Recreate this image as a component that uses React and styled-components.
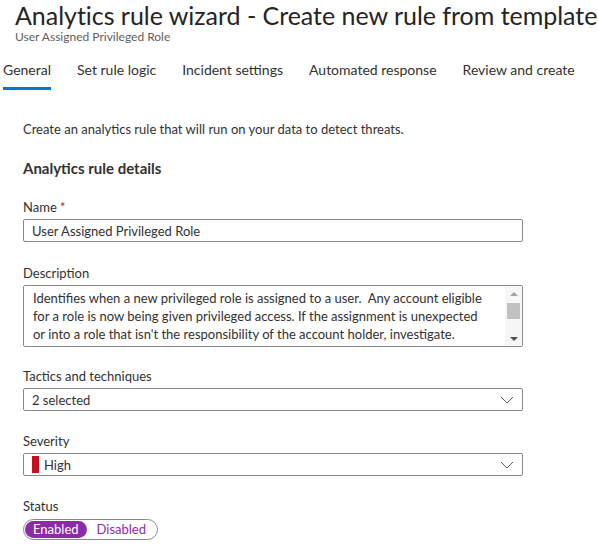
import React from 'react'
import styled, { createGlobalStyle } from 'styled-components'

const GlobalStyle = createGlobalStyle`
  body {
    margin: 0;
    background: #ffffff;
    font-family: Lato, "Open Sans", sans-serif;
    color: #323130;
  }
`

const Page = styled.div`
  width: 598px;
  height: 546px;
  overflow: hidden;
  background: #fff;
`

const Header = styled.header`
  padding: 0 0 0 15px;
`

const Title = styled.h1`
  margin: 0;
  font-size: 25px;
  font-weight: 400;
  line-height: 30px;
  white-space: nowrap;
  letter-spacing: -0.03px;
  color: #252423;
`

const Subtitle = styled.div`
  font-size: 12px;
  line-height: 14px;
  color: #605e5c;
`

const Tabs = styled.nav`
  display: flex;
  gap: 26px;
  padding: 16px 0 0 3px;
`

const Tab = styled.div`
  font-size: 14px;
  line-height: 20px;
  padding-bottom: 7px;
  white-space: nowrap;
  color: #323130;
  border-bottom: 3px solid ${(p) => (p.$active ? '#0078d4' : 'transparent')};
`

const Body = styled.main`
  padding: 30px 0 0 23px;
  width: 500px;
`

const Intro = styled.p`
  margin: 0;
  font-size: 13px;
  line-height: 18px;
`

const SectionTitle = styled.h2`
  margin: 20px 0 0;
  font-size: 15px;
  font-weight: 700;
  line-height: 20px;
`

const Field = styled.div`
  margin-top: ${(p) => p.$gap || 21}px;
`

const Label = styled.div`
  font-size: 13px;
  line-height: 18px;
  margin-bottom: 3px;
`

const Star = styled.span`
  color: #a4262c;
`

const Box = styled.div`
  box-sizing: border-box;
  height: 23px;
  border: 1px solid #8a8886;
  border-radius: 2px;
  display: flex;
  align-items: center;
  padding: 0 8px;
  font-size: 13px;
  color: #323130;
`

const BoxText = styled.span`
  flex: 1;
`

const Chevron = () => (
  <svg width="14" height="8" viewBox="0 0 14 8">
    <path d="M1 1 L7 7 L13 1" fill="none" stroke="#605e5c" strokeWidth="1" />
  </svg>
)

const SeverityBar = styled.span`
  width: 7px;
  height: 17px;
  background: #c50f1f;
  margin-right: 5px;
`

const TextArea = styled.div`
  box-sizing: border-box;
  height: 62px;
  border: 1px solid #8a8886;
  border-radius: 2px;
  display: flex;
  overflow: hidden;
`

const AreaText = styled.div`
  flex: 1;
  padding: 3px 8px 0 9px;
  font-size: 13px;
  line-height: 18px;
  white-space: pre;
  overflow: hidden;
`

const Scrollbar = styled.div`
  width: 17px;
  display: flex;
  flex-direction: column;
  align-items: center;
  background: #f7f7f7;
  padding: 6px 0 5px;
  box-sizing: border-box;
`

const Arrow = styled.div`
  width: 0;
  height: 0;
  border-left: 4px solid transparent;
  border-right: 4px solid transparent;
  ${(p) => (p.$up ? 'border-bottom: 4px solid #a3a3a3;' : 'border-top: 4px solid #505050;')}
`

const Thumb = styled.div`
  width: 13px;
  height: 16px;
  background: #c1c1c1;
  margin-top: 7px;
`

const Spacer = styled.div`
  flex: 1;
`

const Toggle = styled.div`
  display: inline-flex;
  align-items: center;
  box-sizing: border-box;
  height: 21px;
  padding: 1px;
  border: 1px solid #8a8886;
  border-radius: 11px;
  gap: 1px;
  margin-top: 1px;
`

const ToggleOption = styled.span`
  font-size: 13px;
  line-height: 17px;
  padding: ${(p) => (p.$on ? '0 8px' : '0 10px 0 9px')};
  border-radius: 9px;
  color: ${(p) => (p.$on ? '#fff' : '#8c2ba7')};
  background: ${(p) => (p.$on ? '#8c2ba7' : 'transparent')};
`

const tabs = ['General', 'Set rule logic', 'Incident settings', 'Automated response', 'Review and create']

const description = [
  'Identifies when a new privileged role is assigned to a user.  Any account eligible',
  'for a role is now being given privileged access. If the assignment is unexpected',
  "or into a role that isn't the responsibility of the account holder, investigate.",
].join('\n')

export default function App() {
  return (
    <Page>
      <GlobalStyle />
      <Header>
        <Title>Analytics rule wizard - Create new rule from template</Title>
        <Subtitle>User Assigned Privileged Role</Subtitle>
      </Header>
      <Tabs>
        {tabs.map((t, i) => (
          <Tab key={t} $active={i === 0}>{t}</Tab>
        ))}
      </Tabs>
      <Body>
        <Intro>Create an analytics rule that will run on your data to detect threats.</Intro>
        <SectionTitle>Analytics rule details</SectionTitle>

        <Field $gap={20}>
          <Label>Name <Star>*</Star></Label>
          <Box><BoxText>User Assigned Privileged Role</BoxText></Box>
        </Field>

        <Field $gap={22}>
          <Label>Description</Label>
          <TextArea>
            <AreaText>{description}</AreaText>
            <Scrollbar>
              <Arrow $up />
              <Thumb />
              <Spacer />
              <Arrow />
            </Scrollbar>
          </TextArea>
        </Field>

        <Field $gap={20}>
          <Label>Tactics and techniques</Label>
          <Box>
            <BoxText>2 selected</BoxText>
            <Chevron />
          </Box>
        </Field>

        <Field>
          <Label>Severity</Label>
          <Box>
            <SeverityBar />
            <BoxText>High</BoxText>
            <Chevron />
          </Box>
        </Field>

        <Field>
          <Label>Status</Label>
          <Toggle>
            <ToggleOption $on>Enabled</ToggleOption>
            <ToggleOption>Disabled</ToggleOption>
          </Toggle>
        </Field>
      </Body>
    </Page>
  )
}
